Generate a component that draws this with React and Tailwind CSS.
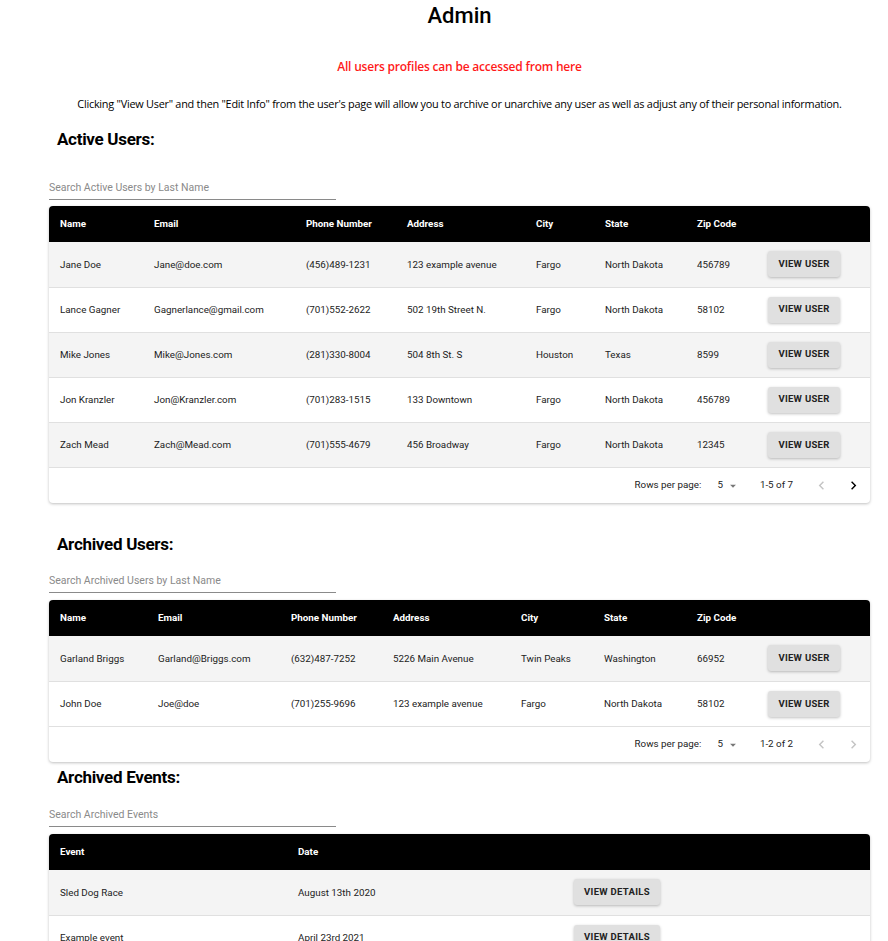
import React from "react";

const activeUsers = [
  ["Jane Doe", "Jane@doe.com", "(456)489-1231", "123 example avenue", "Fargo", "North Dakota", "456789"],
  ["Lance Gagner", "Gagnerlance@gmail.com", "(701)552-2622", "502 19th Street N.", "Fargo", "North Dakota", "58102"],
  ["Mike Jones", "Mike@Jones.com", "(281)330-8004", "504 8th St. S", "Houston", "Texas", "8599"],
  ["Jon Kranzler", "Jon@Kranzler.com", "(701)283-1515", "133 Downtown", "Fargo", "North Dakota", "456789"],
  ["Zach Mead", "Zach@Mead.com", "(701)555-4679", "456 Broadway", "Fargo", "North Dakota", "12345"],
];

const archivedUsers = [
  ["Garland Briggs", "Garland@Briggs.com", "(632)487-7252", "5226 Main Avenue", "Twin Peaks", "Washington", "66952"],
  ["John Doe", "Joe@doe", "(701)255-9696", "123 example avenue", "Fargo", "North Dakota", "58102"],
];

const archivedEvents = [
  ["Sled Dog Race", "August 13th 2020"],
  ["Example event", "April 23rd 2021"],
];

const userHeaders = ["Name", "Email", "Phone Number", "Address", "City", "State", "Zip Code", ""];

function SectionTitle({ children, className }) {
  return (
    <h2 className={"pl-[8px] text-[17px] leading-[24px] font-bold text-black tracking-[-0.3px] font-['Roboto',sans-serif] " + className}>
      {children}
    </h2>
  );
}

function Search({ placeholder, className }) {
  return (
    <div className={"w-[287px] border-b border-[#8a8a8a] pt-[3px] pb-[4px] " + className}>
      <input
        type="text"
        placeholder={placeholder}
        className="block w-full h-[14px] p-0 text-[10.5px] leading-[14px] text-black placeholder-[#8a8a8a] focus:outline-none bg-transparent"
      />
    </div>
  );
}

function GrayButton({ children, className }) {
  return (
    <button
      className={
        "h-[26px] rounded-[3px] bg-[#e0e0e0] text-[9.5px] font-bold uppercase tracking-[0.3px] text-[#222] shadow-[0_1px_3px_rgba(0,0,0,0.25)] " +
        className
      }
    >
      {children}
    </button>
  );
}

function ChevronLeft({ className }) {
  return (
    <svg viewBox="0 0 24 24" className={className} fill="currentColor">
      <path d="M15.41 7.41 14 6l-6 6 6 6 1.41-1.41L10.83 12z" />
    </svg>
  );
}

function ChevronRight({ className }) {
  return (
    <svg viewBox="0 0 24 24" className={className} fill="currentColor">
      <path d="M10 6 8.59 7.41 13.17 12l-4.58 4.59L10 18l6-6z" />
    </svg>
  );
}

function Pagination({ range, nextActive }) {
  return (
    <div className="h-[36px] flex items-center justify-end border-t border-[#e0e0e0] text-[9.8px] text-[#222]">
      <span>Rows per page:</span>
      <span className="ml-[16px] flex items-center">
        5
        <svg viewBox="0 0 24 24" className="w-[14px] h-[14px] ml-[3px] text-[#777]" fill="currentColor">
          <path d="M7 10l5 5 5-5z" />
        </svg>
      </span>
      <span className="ml-[20px]">{range}</span>
      <div className="ml-[20px] mr-[8px] flex items-center gap-[15px]">
        <ChevronLeft className="w-[17px] h-[17px] text-[#c4c4c4]" />
        <ChevronRight className={"w-[17px] h-[17px] " + (nextActive ? "text-black" : "text-[#c4c4c4]")} />
      </div>
    </div>
  );
}

function UserTable({ rows, widths, range, nextActive }) {
  return (
    <div className="rounded-[4px] bg-white shadow-[0_1px_3px_rgba(0,0,0,0.25)] overflow-hidden">
      <table className="w-full table-fixed border-collapse text-[9.8px]">
        <thead>
          <tr className="bg-black h-[36px]">
            {userHeaders.map((h, i) => (
              <th key={i} className={"text-left font-bold text-white pl-[11px] " + widths[i]}>
                {h}
              </th>
            ))}
          </tr>
        </thead>
        <tbody>
          {rows.map((r, i) => (
            <tr
              key={i}
              className={"h-[45px] " + (i < rows.length - 1 ? "border-b border-[#e0e0e0] " : "") + (i % 2 === 0 ? "bg-[#f4f4f4]" : "bg-white")}
            >
              {r.map((c, j) => (
                <td key={j} className="pl-[11px] pt-[2px] text-[#222]">
                  {c}
                </td>
              ))}
              <td className="pl-[11px]">
                <GrayButton className="w-[72px]">View User</GrayButton>
              </td>
            </tr>
          ))}
        </tbody>
      </table>
      <Pagination range={range} nextActive={nextActive} />
    </div>
  );
}

export default function App() {
  return (
    <div className="min-h-screen bg-white pl-[49px] pr-[18px] font-['Open_Sans',sans-serif]">
      <h1 className="text-center text-[22px] leading-[32px] font-medium text-black font-['Roboto',sans-serif]">Admin</h1>

      <p className="mt-[27px] text-center text-[12px] leading-[16px] font-semibold text-[#ff1a1a] tracking-[-0.2px]">
        All users profiles can be accessed from here
      </p>

      <p className="mt-[21px] text-center text-[10.9px] leading-[16px] text-black tracking-[-0.25px]">
        Clicking "View User" and then "Edit Info" from the user's page will allow you to archive or unarchive any
        user as well as adjust any of their personal information.
      </p>

      <div className="font-['Roboto',sans-serif]">
        <SectionTitle className="mt-[15px]">Active Users:</SectionTitle>
        <Search placeholder="Search Active Users by Last Name" className="mt-[27px]" />
        <div className="mt-[6px]">
          <UserTable
            rows={activeUsers}
            widths={["w-[94px]", "w-[152px]", "w-[101px]", "w-[129px]", "w-[69px]", "w-[92px]", "w-[71px]", "w-[113px]"]}
            range="1-5 of 7"
            nextActive
          />
        </div>

        <SectionTitle className="mt-[29px]">Archived Users:</SectionTitle>
        <Search placeholder="Search Archived Users by Last Name" className="mt-[15px]" />
        <div className="mt-[7px]">
          <UserTable
            rows={archivedUsers}
            widths={["w-[98px]", "w-[133px]", "w-[102px]", "w-[128px]", "w-[83px]", "w-[93px]", "w-[71px]", "w-[113px]"]}
            range="1-2 of 2"
          />
        </div>

        <SectionTitle className="mt-[3px]">Archived Events:</SectionTitle>
        <Search placeholder="Search Archived Events" className="mt-[16px]" />
        <div className="mt-[7px] rounded-[4px] bg-white shadow-[0_1px_3px_rgba(0,0,0,0.25)] overflow-hidden">
          <table className="w-full table-fixed border-collapse text-[9.8px]">
            <thead>
              <tr className="bg-black h-[36px]">
                <th className="text-left font-bold text-white pl-[11px] w-[238px]">Event</th>
                <th className="text-left font-bold text-white pl-[11px] w-[276px]">Date</th>
                <th className="w-[307px]"></th>
              </tr>
            </thead>
            <tbody>
              {archivedEvents.map((e, i) => (
                <tr
                  key={i}
                  className={"h-[45px] border-b border-[#e0e0e0] " + (i % 2 === 0 ? "bg-[#f4f4f4]" : "bg-white")}
                >
                  <td className="pl-[11px] pt-[2px] text-[#222]">{e[0]}</td>
                  <td className="pl-[11px] pt-[2px] text-[#222]">{e[1]}</td>
                  <td className="pl-[11px]">
                    <GrayButton className="w-[86px]">View Details</GrayButton>
                  </td>
                </tr>
              ))}
            </tbody>
          </table>
        </div>
      </div>
    </div>
  );
}
